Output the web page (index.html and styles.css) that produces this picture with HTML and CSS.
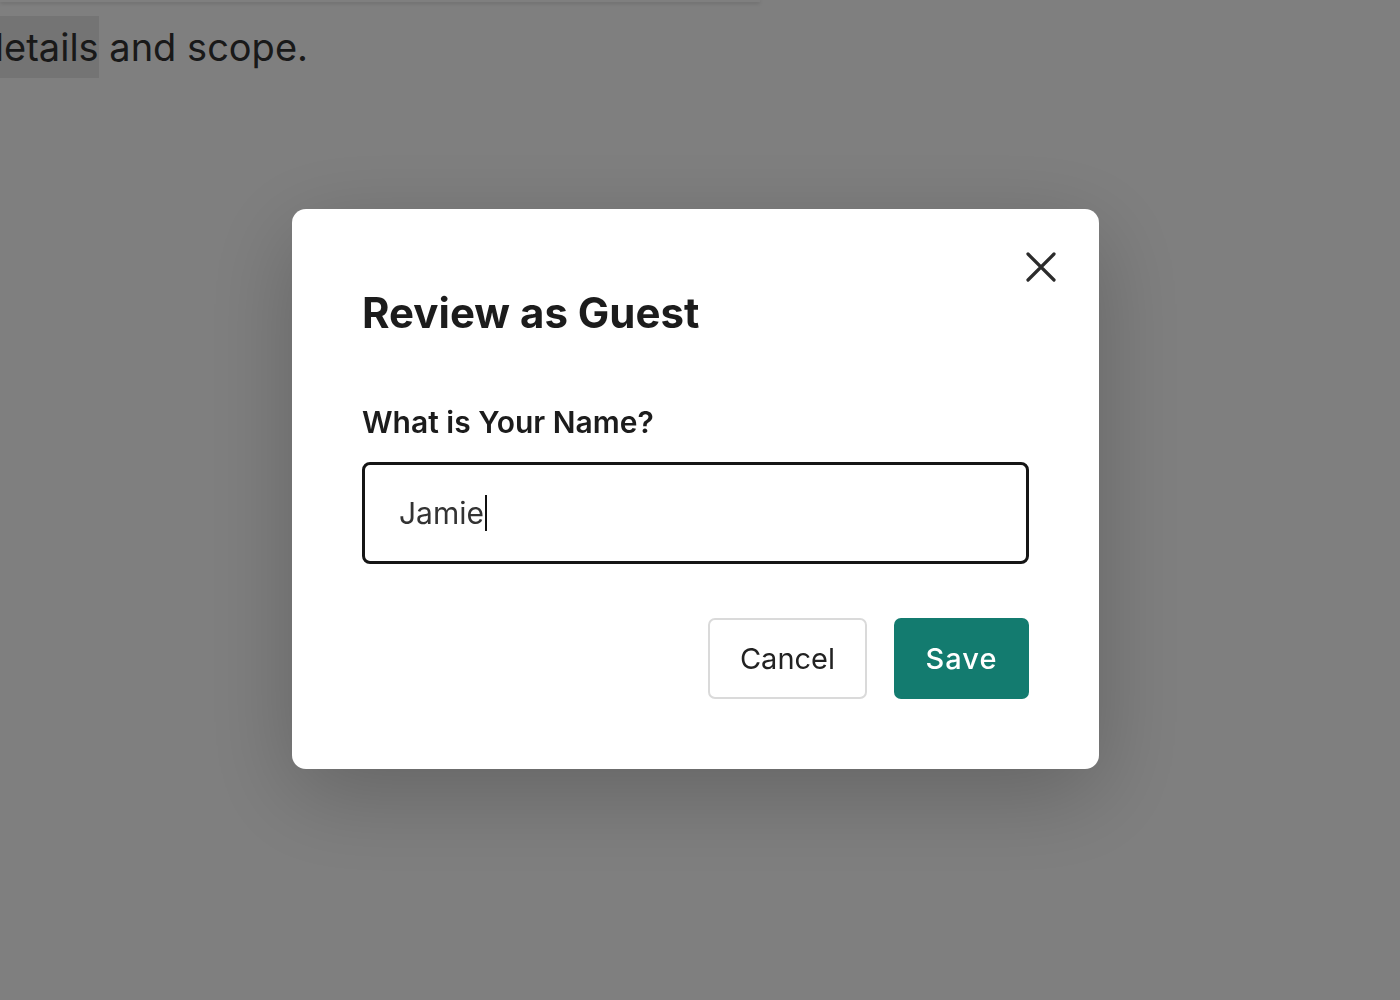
FILE: index.html
```html
<!DOCTYPE html>
<html lang="en">
<head>
    <meta charset="UTF-8">
    <meta name="viewport" content="width=device-width, initial-scale=1.0">
    <title>Review as Guest</title>
    <link rel="stylesheet" href="styles.css">
</head>
<body>

    <div class="page">
        <div class="topbar"></div>
        <p class="intro">Please review the project <span class="mark">details</span> and scope.</p>
    </div>

    <div class="overlay">
        <div class="modal">
            <button class="close" aria-label="Close">
                <svg width="30" height="30" viewBox="0 0 30 30">
                    <path d="M2 2 L28 28 M28 2 L2 28" stroke="#2b2b2b" stroke-width="3.2" stroke-linecap="round" fill="none"/>
                </svg>
            </button>
            <h2 class="title">Review as Guest</h2>
            <label class="label" for="guestName">What is Your Name?</label>
            <div class="field">
                <span class="value">Jamie</span><span class="caret"></span>
            </div>
            <div class="actions">
                <button class="btn btn-cancel">Cancel</button>
                <button class="btn btn-save">Save</button>
            </div>
        </div>
    </div>

</body>
</html>
```

FILE: styles.css
```css
* {
    box-sizing: border-box;
}
body {
    margin: 0;
    background-color: white;
    font-family: Inter, "Noto Sans", sans-serif;
    color: #2a2a2a;
    overflow: hidden;
}
.page {
    height: 1000px;
}
.topbar {
    width: 760px;
    height: 2px;
    box-shadow: 0 1px 4px rgba(0, 0, 0, 0.25);
}
.intro {
    margin: 14px 0 0 -482px;
    font-size: 38px;
    line-height: 62px;
    white-space: nowrap;
    color: #333;
}
.mark {
    background-color: #e8e8e8;
    padding: 8px 0;
}
.overlay {
    position: fixed;
    inset: 0;
    background-color: rgba(0, 0, 0, 0.5);
    display: flex;
    justify-content: center;
    align-items: center;
    padding: 0 9px 22px 0;
}
.modal {
    position: relative;
    width: 807px;
    background-color: white;
    border-radius: 14px;
    padding: 79px 70px 70px;
    display: flex;
    flex-direction: column;
    box-shadow: 0 24px 90px rgba(0, 0, 0, 0.22);
}
.close {
    position: absolute;
    top: 43px;
    right: 43px;
    width: 30px;
    height: 30px;
    padding: 0;
    border: none;
    background: none;
    cursor: pointer;
}
.title {
    margin: 0;
    font-size: 42px;
    line-height: 50px;
    font-weight: 700;
    color: #1c1c1c;
}
.label {
    margin-top: 66px;
    font-size: 30px;
    line-height: 36px;
    font-weight: 600;
    color: #1c1c1c;
}
.field {
    margin-top: 22px;
    height: 102px;
    flex-shrink: 0;
    border: 3px solid #151515;
    border-radius: 8px;
    padding: 0 34px;
    display: flex;
    align-items: center;
    font-size: 30px;
    color: #333;
}
.caret {
    width: 2px;
    height: 36px;
    background-color: #111;
    margin-left: 1px;
}
.actions {
    margin-top: 54px;
    display: flex;
    justify-content: flex-end;
    gap: 27px;
}
.btn {
    height: 81px;
    border-radius: 7px;
    font-family: Inter, "Noto Sans", sans-serif;
    font-size: 29px;
    cursor: pointer;
}
.btn-cancel {
    width: 159px;
    background-color: white;
    border: 2px solid #dadada;
    color: #222;
}
.btn-save {
    width: 135px;
    background-color: #137b6f;
    border: none;
    color: white;
    font-weight: 500;
    letter-spacing: 1px;
}
```
